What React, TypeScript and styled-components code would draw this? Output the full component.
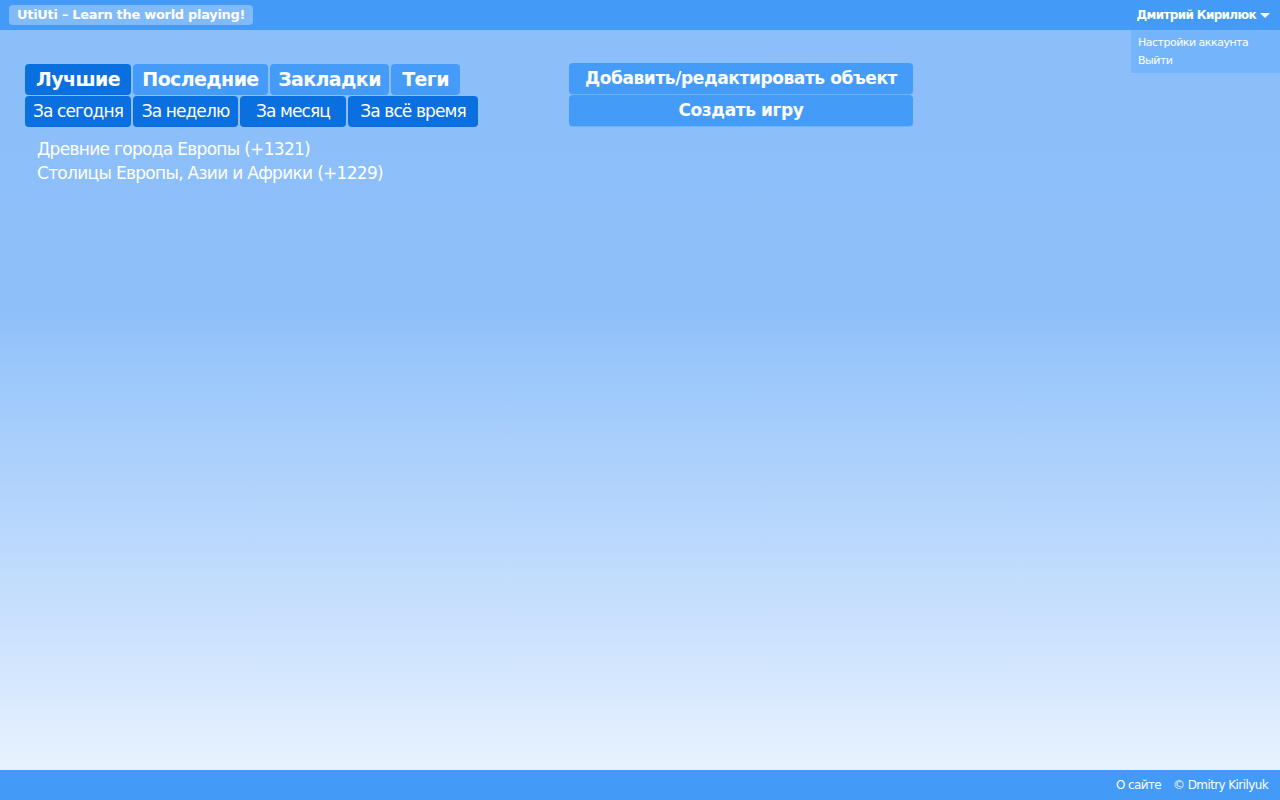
import React from "react";
import styled, { createGlobalStyle } from "styled-components";

const GlobalStyle = createGlobalStyle`
  html, body {
    margin: 0;
    padding: 0;
    height: 100%;
  }
  body {
    font-family: "DejaVu Sans", Verdana, sans-serif;
  }
  #root {
    height: 100%;
  }
`;

const Page = styled.div`
  display: flex;
  flex-direction: column;
  height: 800px;
  background: linear-gradient(to bottom, #8bbefa 0%, #8ebff9 38%, #a4ccfb 52%, #cae1fd 78%, #eff6fe 100%);
  color: #fff;
`;

const TopBar = styled.header`
  position: relative;
  display: flex;
  justify-content: space-between;
  align-items: center;
  height: 30px;
  padding: 0 10px 0 9px;
  background: #439af7;
`;

const Logo = styled.div`
  height: 20px;
  line-height: 20px;
  padding: 0 8px;
  border-radius: 4px;
  background: #80baf9;
  font-size: 13px;
  font-weight: bold;
  letter-spacing: -0.3px;
`;

const User = styled.div`
  display: flex;
  align-items: center;
  gap: 4px;
  font-size: 12px;
  font-weight: bold;
  letter-spacing: -0.65px;
`;

const Caret = styled.span`
  width: 0;
  height: 0;
  border-left: 5px solid transparent;
  border-right: 5px solid transparent;
  border-top: 5px solid #fff;
`;

const Dropdown = styled.div`
  position: absolute;
  top: 30px;
  right: 0;
  width: 142px;
  padding: 4px 0 3px 7px;
  background: #74b4fa;
  font-size: 11px;
  line-height: 18px;
  letter-spacing: -0.5px;
`;

const Main = styled.main`
  flex: 1;
  display: flex;
  gap: 91px;
  padding: 34px 25px 0;
`;

const LeftColumn = styled.div`
  display: flex;
  flex-direction: column;
  gap: 1px;
`;

const TabRow = styled.div`
  display: flex;
  gap: 2px;
`;

const Tab = styled.div<{ $active?: boolean; $w: number }>`
  width: ${(p) => p.$w}px;
  height: 31px;
  line-height: 31px;
  text-align: center;
  border-radius: 4px;
  background: ${(p) => (p.$active ? "#0a6fdf" : "#449cf8")};
  font-size: 19px;
  font-weight: bold;
  letter-spacing: -0.6px;
`;

const Period = styled.div<{ $w: number }>`
  width: ${(p) => p.$w}px;
  height: 31px;
  line-height: 31px;
  text-align: center;
  border-radius: 4px;
  background: #0a6fdf;
  font-size: 17px;
  letter-spacing: -0.9px;
`;

const GameList = styled.ul`
  list-style: none;
  margin: 9px 0 0 12px;
  padding: 0;
  font-size: 17px;
  line-height: 24px;
  letter-spacing: -0.7px;
`;

const RightColumn = styled.div`
  display: flex;
  flex-direction: column;
  width: 344px;
  margin-top: -1px;
`;

const ActionButton = styled.div`
  height: 31px;
  line-height: 31px;
  text-align: center;
  border-radius: 4px;
  background: #449cf8;
  border-bottom: 1px solid #6fb3fa;
  font-size: 17px;
  font-weight: bold;
  letter-spacing: -0.4px;
`;

const Footer = styled.footer`
  display: flex;
  justify-content: flex-end;
  align-items: center;
  gap: 12px;
  height: 30px;
  padding: 0 12px;
  background: #439af7;
  font-size: 12px;
  letter-spacing: -0.6px;
`;

const tabs = [
  { label: "Лучшие", w: 106, active: true },
  { label: "Последние", w: 135 },
  { label: "Закладки", w: 119 },
  { label: "Теги", w: 69 },
];

const periods = [
  { label: "За сегодня", w: 106 },
  { label: "За неделю", w: 105 },
  { label: "За месяц", w: 106 },
  { label: "За всё время", w: 130 },
];

const games = ["Древние города Европы (+1321)", "Столицы Европы, Азии и Африки (+1229)"];

export default function App() {
  return (
    <>
      <GlobalStyle />
      <Page>
        <TopBar>
          <Logo>UtiUti – Learn the world playing!</Logo>
          <User>
            Дмитрий Кирилюк <Caret />
          </User>
          <Dropdown>
            <div>Настройки аккаунта</div>
            <div>Выйти</div>
          </Dropdown>
        </TopBar>
        <Main>
          <LeftColumn>
            <TabRow>
              {tabs.map((t) => (
                <Tab key={t.label} $w={t.w} $active={t.active}>
                  {t.label}
                </Tab>
              ))}
            </TabRow>
            <TabRow>
              {periods.map((p) => (
                <Period key={p.label} $w={p.w}>
                  {p.label}
                </Period>
              ))}
            </TabRow>
            <GameList>
              {games.map((g) => (
                <li key={g}>{g}</li>
              ))}
            </GameList>
          </LeftColumn>
          <RightColumn>
            <ActionButton>Добавить/редактировать объект</ActionButton>
            <ActionButton>Создать игру</ActionButton>
          </RightColumn>
        </Main>
        <Footer>
          <span>О сайте</span>
          <span>© Dmitry Kirilyuk</span>
        </Footer>
      </Page>
    </>
  );
}
